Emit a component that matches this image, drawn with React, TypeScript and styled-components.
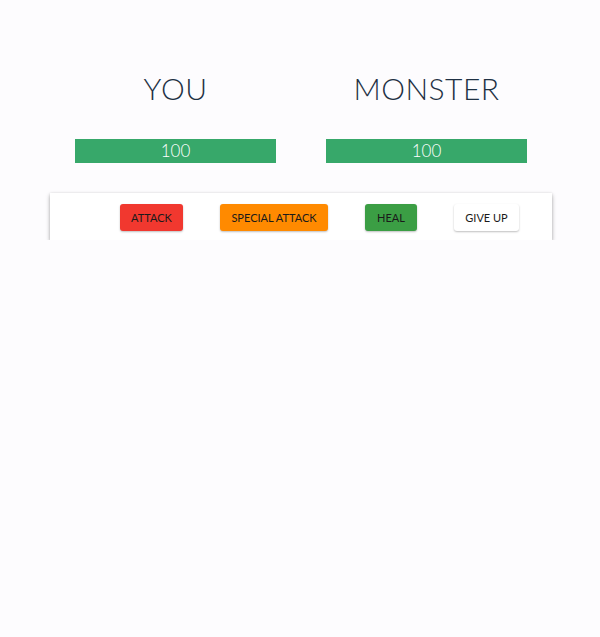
import React from "react";
import styled, { createGlobalStyle } from "styled-components";

const Global = createGlobalStyle`
  html, body { margin: 0; padding: 0; background: #fdfcfe; }
  body { font-family: "Lato", "Liberation Sans", sans-serif; color: #2c3e50; }
`;

const Page = styled.div`
  width: 502px;
  margin: 0 0 0 50px;
  padding-top: 68px;
`;

const Players = styled.div`
  display: grid;
  grid-template-columns: 1fr 1fr;
`;

const Player = styled.section`
  display: flex;
  flex-direction: column;
  align-items: center;
`;

const Title = styled.h1`
  margin: 0;
  font-size: 30px;
  font-weight: 300;
  line-height: 40px;
  color: #1f3144;
  letter-spacing: 0.5px;
`;

const Bar = styled.div`
  margin-top: 31px;
  width: 80%;
  height: 24px;
  background: #ecebee;
  display: flex;
`;

const Fill = styled.div`
  background: #37a86a;
  color: #ffffff;
  font-size: 17px;
  font-weight: 300;
  line-height: 24px;
  text-align: center;
`;

const Controls = styled.div`
  margin-top: 30px;
  height: 47px;
  background: #fff;
  box-shadow: 0 2px 4px rgba(0, 0, 0, 0.34), 0 0 2px rgba(0, 0, 0, 0.08);
  display: flex;
  align-items: center;
  justify-content: center;
  gap: 37px;
  padding-left: 37px;
  padding-top: 1px;
  box-sizing: border-box;
`;

const Button = styled.button<{ $bg: string; $w: number }>`
  flex: 0 0 auto;
  width: ${(p) => p.$w}px;
  height: 27px;
  padding: 0;
  border: none;
  border-radius: 3px;
  background: ${(p) => p.$bg};
  color: #1a1a1a;
  font-family: "Lato", "Liberation Sans", sans-serif;
  font-size: 11px;
  font-weight: 400;
  white-space: nowrap;
  text-transform: uppercase;
  box-shadow: 0 1px 2px rgba(0, 0, 0, 0.25);
  cursor: pointer;
`;

const players = [
  { name: "YOU", health: 100 },
  { name: "MONSTER", health: 100 },
];

export default function App() {
  return (
    <>
      <Global />
      <Page>
        <Players>
          {players.map((p) => (
            <Player key={p.name}>
              <Title>{p.name}</Title>
              <Bar>
                <Fill style={{ width: `${p.health}%` }}>{p.health}</Fill>
              </Bar>
            </Player>
          ))}
        </Players>
        <Controls>
          <Button $bg="#f1382f" $w={63}>Attack</Button>
          <Button $bg="#ff8a00" $w={108}>Special Attack</Button>
          <Button $bg="#3b9e44" $w={52}>Heal</Button>
          <Button $bg="#ffffff" $w={65}>Give Up</Button>
        </Controls>
      </Page>
    </>
  );
}
